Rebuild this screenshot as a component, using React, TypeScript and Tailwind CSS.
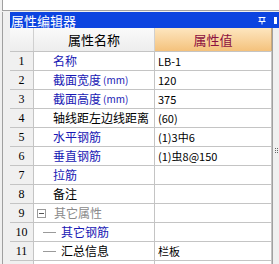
import React from 'react';

type Row = {
  no?: number;
  name: string;
  unit?: string;
  value?: string;
  tone: 'blue' | 'black' | 'gray';
  kind?: 'group' | 'child';
};

const rows: Row[] = [
  { no: 1, name: '名称', value: 'LB-1', tone: 'blue' },
  { no: 2, name: '截面宽度', unit: '(mm)', value: '120', tone: 'blue' },
  { no: 3, name: '截面高度', unit: '(mm)', value: '375', tone: 'blue' },
  { no: 4, name: '轴线距左边线距离', value: '(60)', tone: 'black' },
  { no: 5, name: '水平钢筋', value: '(1)3中6', tone: 'blue' },
  { no: 6, name: '垂直钢筋', value: '(1)虫8@150', tone: 'blue' },
  { no: 7, name: '拉筋', tone: 'blue' },
  { no: 8, name: '备注', tone: 'black' },
  { no: 9, name: '其它属性', tone: 'gray', kind: 'group' },
  { no: 10, name: '其它钢筋', tone: 'blue', kind: 'child' },
  { no: 11, name: '汇总信息', value: '栏板', tone: 'black', kind: 'child' },
  { name: '', tone: 'black' },
];

const toneClass = {
  blue: 'text-[#1818b4]',
  black: 'text-black',
  gray: 'text-[#8a8a8a]',
};

function NameCell({ row }: { row: Row }) {
  if (row.kind === 'group') {
    return (
      <div className="flex items-center pl-[3px] gap-[8px]">
        <span className="w-[9px] h-[9px] border border-[#9a9a9a] bg-white flex items-center justify-center">
          <span className="w-[5px] h-px bg-[#555]" />
        </span>
        <span className={toneClass[row.tone]}>{row.name}</span>
      </div>
    );
  }
  if (row.kind === 'child') {
    return (
      <div className="flex items-center pl-[9px] gap-[5px]">
        <span className="w-[13px] h-px bg-[#9a9a9a]" />
        <span className={toneClass[row.tone]}>{row.name}</span>
      </div>
    );
  }
  return (
    <div className={`pl-[19px] whitespace-nowrap flex items-center ${toneClass[row.tone]}`}>
      {row.name}
      {row.unit && <span className="text-[10px] ml-[2px]">{row.unit}</span>}
    </div>
  );
}

export default function App() {
  return (
    <div
      className="w-[279px] h-[264px] overflow-hidden bg-[#f0f0f0] flex flex-col text-[12px] leading-none"
      style={{ fontFamily: '"Noto Sans CJK SC", "Liberation Sans", sans-serif' }}
    >
      <div className="h-[11px] shrink-0 ml-[2px] bg-white border-l border-b border-[#a0a0a0]" />
      <div className="flex flex-1 pt-[1px]">
        <div className="w-[10px] shrink-0 flex">
          <div className="ml-[2px] w-px bg-[#a0a0a0]" />
        </div>
        <div className="flex-1 flex flex-col">
          <div className="h-[16px] shrink-0 bg-[#0c44e0] flex items-center text-white text-[13px] pl-[1px] pr-[2px]">
            <span className="flex-1">属性编辑器</span>
            <svg width="8" height="9" viewBox="0 0 8 9" className="mr-[8px]">
              <path d="M0.5 1.5h7M2 1.5v4h4v-4M0.5 5.5h7M4 5.5v3" stroke="white" strokeWidth="1" fill="none" />
            </svg>
            <span className="w-[3px] h-[7px] bg-white" />
          </div>
          <div className="flex flex-1">
            <div className="w-[262px] shrink-0 flex flex-col bg-white">
              <div className="h-[24px] shrink-0 flex border-b border-[#c4c4c4] text-[13px]">
                <div className="w-[24px] shrink-0 bg-gradient-to-b from-[#fafafa] to-[#ededed] border-r border-[#d0d0d0]" />
                <div className="w-[121px] shrink-0 bg-gradient-to-b from-[#fafafa] to-[#ededed] border-r border-[#d0d0d0] flex items-center justify-center text-black">
                  属性名称
                </div>
                <div className="w-[117px] shrink-0 bg-gradient-to-b from-[#fde6bf] to-[#f4c27c] border-r border-[#c8a878] flex items-center justify-center text-[#8c1040]">
                  属性值
                </div>
              </div>
              {rows.map((row, i) => (
                <div key={i} className="h-[19px] shrink-0 flex border-b border-[#c4c4c4]">
                  <div
                    className="w-[24px] shrink-0 bg-[#f0f0f0] border-r border-[#c4c4c4] flex items-center justify-center text-black"
                    style={{ fontFamily: '"Liberation Serif", serif' }}
                  >
                    {row.no}
                  </div>
                  <div className="w-[121px] shrink-0 border-r border-[#c4c4c4] flex items-center overflow-visible">
                    <NameCell row={row} />
                  </div>
                  <div className="w-[117px] shrink-0 border-r border-[#c4c4c4] flex items-center pl-[3px] text-black text-[11px]">
                    {row.value}
                  </div>
                </div>
              ))}
            </div>
            <div className="flex-1 flex">
              <div className="w-px bg-[#a0a0a0]" />
              <div className="flex-1 flex items-center justify-end pr-[1px]">
                <div className="grid grid-cols-2 gap-px mb-[8px]">
                  <span className="w-px h-px bg-[#666]" />
                  <span className="w-px h-px bg-[#666]" />
                  <span className="w-px h-px bg-[#666]" />
                  <span className="w-px h-px bg-[#666]" />
                  <span className="w-px h-px bg-[#666]" />
                  <span className="w-px h-px bg-[#666]" />
                </div>
              </div>
            </div>
          </div>
        </div>
      </div>
    </div>
  );
}
